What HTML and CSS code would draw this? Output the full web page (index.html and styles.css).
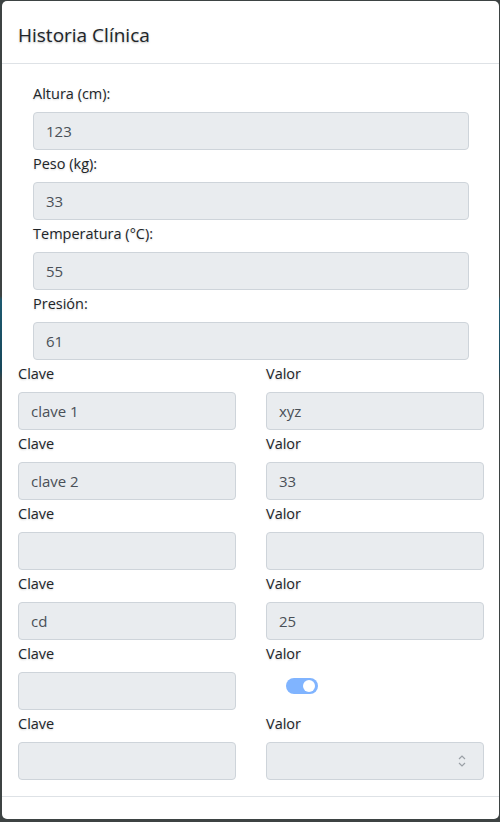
FILE: index.html
```html
<!DOCTYPE html>
<html lang="es">
<head>
<meta charset="utf-8">
<link rel="stylesheet" href="styles.css">
</head>
<body>
<div class="modal">
  <div class="modal-header"><h5 class="modal-title">Historia Clínica</h5></div>
  <div class="modal-body">
    <div class="vitals">
      <div class="group"><label>Altura (cm):</label><div class="input">123</div></div>
      <div class="group"><label>Peso (kg):</label><div class="input">33</div></div>
      <div class="group"><label>Temperatura (°C):</label><div class="input">55</div></div>
      <div class="group"><label>Presión:</label><div class="input">61</div></div>
    </div>
    <div class="kv">
      <div class="group"><label>Clave</label><div class="input">clave 1</div></div>
      <div class="group"><label>Valor</label><div class="input">xyz</div></div>
      <div class="group"><label>Clave</label><div class="input">clave 2</div></div>
      <div class="group"><label>Valor</label><div class="input">33</div></div>
      <div class="group"><label>Clave</label><div class="input"></div></div>
      <div class="group"><label>Valor</label><div class="input"></div></div>
      <div class="group"><label>Clave</label><div class="input">cd</div></div>
      <div class="group"><label>Valor</label><div class="input">25</div></div>
      <div class="group"><label>Clave</label><div class="input"></div></div>
      <div class="group"><label>Valor</label><div class="switch-wrap"><span class="switch"><span class="knob"></span></span></div></div>
      <div class="group"><label>Clave</label><div class="input"></div></div>
      <div class="group"><label>Valor</label><div class="input select"><svg class="chev" width="10" height="16" viewBox="0 0 10 16"><path d="M2 6 L5 3 L8 6 M2 10 L5 13 L8 10" fill="none" stroke="#9aa0a6" stroke-width="1.2"/></svg></div></div>
    </div>
  </div>
  <div class="modal-footer"></div>
</div>
</body>
</html>
```

FILE: styles.css
```css
* { box-sizing: border-box; }
html, body { margin: 0; padding: 0; }
body {
  width: 500px;
  height: 822px;
  overflow: hidden;
  font-family: "Open Sans", "Noto Sans", sans-serif;
  color: #212529;
  background: linear-gradient(to bottom, #3d4343 0, #3d4343 296px, #1d5a70 300px, #17475a 370px, #3d4343 380px, #3d4343 100%);
  padding: 1px 1px 3px 2px;
}
.modal {
  width: 497px;
  height: 818px;
  background: #fff;
  border-radius: 5px;
  display: flex;
  flex-direction: column;
  overflow: hidden;
}
.modal-header {
  height: 63px;
  border-bottom: 1px solid #dee2e6;
  padding: 19px 16px 0;
}
.modal-title {
  margin: 0;
  font-size: 19px;
  font-weight: 400;
  line-height: 30px;
  text-shadow: 0 1px 2px rgba(0,0,0,0.25);
}
.modal-body {
  padding: 18px 15px 16px 16px;
  display: flex;
  flex-direction: column;
  gap: 2px;
}
.vitals {
  padding: 0 15px;
  display: flex;
  flex-direction: column;
  gap: 2px;
}
.kv {
  display: grid;
  grid-template-columns: 218px 218px;
  column-gap: 30px;
  row-gap: 2px;
}
.group { display: flex; flex-direction: column; }
label {
  display: block;
  font-size: 14.5px;
  line-height: 24px;
  margin-bottom: 6px;
  text-shadow: 0 1px 2px rgba(0,0,0,0.15);
}
.input {
  height: 38px;
  background: #e9ecef;
  border: 1px solid #ced4da;
  border-radius: 4px;
  padding: 6px 12px;
  font-size: 15px;
  line-height: 24px;
  color: #495057;
  position: relative;
}
.select .chev {
  position: absolute;
  right: 16px;
  top: 10px;
}
.switch-wrap {
  height: 38px;
  display: flex;
  align-items: flex-start;
  padding: 6px 0 0 20px;
}
.switch {
  width: 32px;
  height: 16px;
  border-radius: 8px;
  background: #80b4ff;
  display: flex;
  align-items: center;
  justify-content: flex-end;
  padding-right: 3px;
}
.knob {
  width: 12px;
  height: 12px;
  border-radius: 50%;
  background: #fff;
}
.modal-footer {
  flex: 1;
  border-top: 1px solid #dee2e6;
}
```
